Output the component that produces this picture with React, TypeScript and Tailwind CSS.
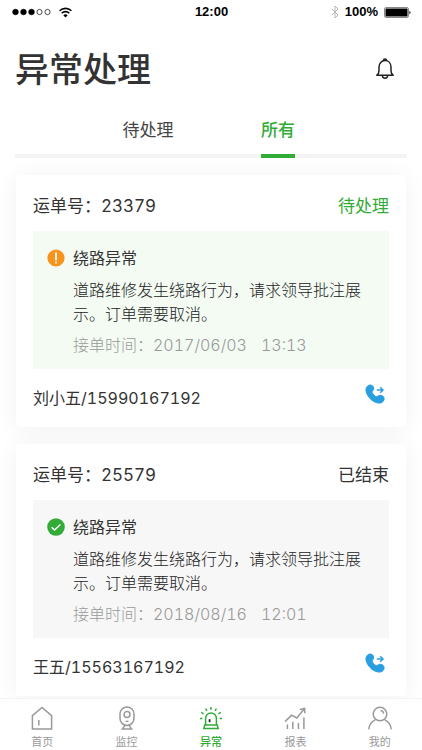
import { useState, type ReactNode } from 'react';
import clsx from 'clsx';

type Order = {
  id: string;
  status: string;
  pending: boolean;
  title: string;
  detail: string;
  date: string;
  time: string;
  driver: string;
  phone: string;
};

const orders: Order[] = [
  {
    id: '23379',
    status: '待处理',
    pending: true,
    title: '绕路异常',
    detail: '道路维修发生绕路行为，请求领导批注展示。订单需要取消。',
    date: '2017/06/03',
    time: '13:13',
    driver: '刘小五',
    phone: '15990167192',
  },
  {
    id: '25579',
    status: '已结束',
    pending: false,
    title: '绕路异常',
    detail: '道路维修发生绕路行为，请求领导批注展示。订单需要取消。',
    date: '2018/08/16',
    time: '12:01',
    driver: '王五',
    phone: '15563167192',
  },
];

const navItems: { label: string; active?: boolean; icon: ReactNode }[] = [
  {
    label: '首页',
    icon: (
      <>
        <path d="M2.4 23V9.6L12 1.4l9.6 8.2V23z" />
        <path d="M8.8 14v5.6" />
      </>
    ),
  },
  {
    label: '监控',
    icon: (
      <>
        <rect x="5" y="1" width="14" height="18.4" rx="7" />
        <circle cx="12" cy="8.6" r="3" />
        <path d="M10.600 15.400h2.8" />
        <path d="M10 19.400l-2.600 3.600h9.200L14 19.400" />
      </>
    ),
  },
  {
    label: '异常',
    active: true,
    icon: (
      <>
        <path d="M6.6 19v-6.6a5.4 5.4 0 0 1 10.8 0V19" />
        <path d="M4.8 22.6l.9-3.6h12.6l.9 3.6z" />
        <path d="M12 1v2.8M6.6 2.6l1.4 2.2M17.4 2.6L16 4.8M2.2 6.4l2.4 1.4M21.8 6.4l-2.4 1.4M1 12.6h2.4M20.6 12.6H23" />
        <path d="M10.6 13.2v3" stroke="#222" strokeWidth="1.8" />
      </>
    ),
  },
  {
    label: '报表',
    icon: (
      <>
        <path d="M2 15.6l6.6-6.4 5.2 2.8 7.4-9" />
        <path d="M16.8 3.4l4.8-.9.2 4.7" />
        <path d="M4.400 23v-4.600M9.800 23v-7.200M15.400 23v-6M20.900 23V11.400" />
      </>
    ),
  },
  {
    label: '我的',
    icon: (
      <>
        <circle cx="12" cy="8" r="6.8" />
        <path d="M12.6 4.4a3.6 3.6 0 0 1 3 3.2" />
        <path d="M.8 23.400c.2-4.400 2.800-7.800 6.600-9.800M23.200 23.400c-.2-4.400-2.800-7.800-6.600-9.800" />
      </>
    ),
  },
];

function StatusBar() {
  return (
    <div className="grid h-6 grid-cols-3 items-center pr-[11px] pl-3 font-['Liberation_Sans',sans-serif] text-[13px] font-bold text-black">
      <div className="flex items-center gap-2">
        <svg width="39" height="8" viewBox="0 0 39 8" stroke="#000" strokeWidth="0.7">
          <circle cx="3.5" cy="4" r="2.8" />
          <circle cx="11.5" cy="4" r="2.8" />
          <circle cx="19.5" cy="4" r="2.8" />
          <circle cx="27.5" cy="4" r="2.6" fill="none" />
          <circle cx="35.5" cy="4" r="2.6" fill="none" />
        </svg>
        <svg width="13" height="11" viewBox="0 0 13 11" fill="none" stroke="#000" strokeWidth="1.6">
          <path d="M.6 3.8a8.4 8.4 0 0 1 11.8 0" />
          <path d="M2.7 6.2a5.4 5.4 0 0 1 7.6 0" />
          <path d="M6.5 10.6L4.3 8.3a3.1 3.1 0 0 1 4.4 0z" fill="#000" stroke="none" />
        </svg>
      </div>
      <span className="text-center">12:00</span>
      <div className="flex items-center justify-end gap-1.5">
        <svg width="8" height="14" viewBox="0 0 8 14" fill="none" stroke="#b5b5b5" strokeWidth="1">
          <path d="M.8 3.8l6.2 6.2L4 13V1l3 3-6.2 6.2" />
        </svg>
        <span>100%</span>
        <svg width="27" height="11" viewBox="0 0 27 11">
          <rect x="0.5" y="0.5" width="24" height="10" rx="1.6" fill="#fff" stroke="#888" />
          <rect x="1.5" y="1.5" width="22" height="8" rx="0.6" fill="#000" />
          <path d="M25.4 3.8c1.6.4 1.6 3 0 3.4z" fill="#222" />
        </svg>
      </div>
    </div>
  );
}

function StateIcon({ pending }: { pending: boolean }) {
  return pending ? (
    <svg width="18" height="18" viewBox="0 0 18 18" className="shrink-0">
      <circle cx="9" cy="9" r="8.6" fill="#f7941f" />
      <path d="M9 3.4v8M9 12.800v1.800" stroke="#fff" strokeWidth="1.700" />
    </svg>
  ) : (
    <svg width="18" height="18" viewBox="0 0 18 18" className="shrink-0">
      <circle cx="9" cy="9" r="8.8" fill="#33ab37" />
      <path d="M4.6 9.2l3 2.9 5.8-5.6" fill="none" stroke="#fff" strokeWidth="1.4" />
    </svg>
  );
}

function CallIcon() {
  return (
    <svg width="20" height="20" viewBox="0 0 20 20" fill="#2a9fe0" stroke="#2a9fe0">
      <path
        d="M1 5.2C1.4 2.6 3.2 1 5.2 1c1.9 0 3.3 1.3 3.5 3.2.1 1.3-.6 2-1.2 2.8-.6.9-.3 1.9.6 3 .9 1.2 2.2 2.5 3.4 2.6 1 .1 1.7-.9 2.8-1.2 1.9-.5 4.5.6 4.8 2.8.3 2.4-1.6 4.8-4.4 4.9-3.4.1-7.4-1.8-10.2-5.2C2 10.900.6 7.900 1 5.200z"
        strokeWidth="1"
      />
      <path d="M11.8 6h6M15.200 3.200L18 6l-2.800 2.800" fill="none" strokeWidth="1.500" />
    </svg>
  );
}

function OrderCard({ order }: { order: Order }) {
  return (
    <article className="rounded bg-white px-[17px] shadow-[0_2px_24px_rgba(0,0,0,0.06)]">
      <header className="flex h-14 items-center justify-between pt-2 text-[17px] text-[#333]">
        <h2>运单号：{order.id}</h2>
        <span className={clsx(order.pending && 'text-[#33ab37]')}>{order.status}</span>
      </header>
      <div className={clsx('px-3.5 pt-[15px] pb-3', order.pending ? 'bg-[#f3fbf3]' : 'bg-[#f7f7f7]')}>
        <div className="flex items-center gap-2">
          <StateIcon pending={order.pending} />
          <h3 className="text-base/6 text-[#333]">{order.title}</h3>
        </div>
        <div className="pl-[26px]">
          <p className="mt-2 text-base/6 font-light text-[#222]">{order.detail}</p>
          <p className="mt-[7px] flex gap-3.5 text-base/6 font-light text-[#999]">
            <span>接单时间：{order.date}</span>
            <time>{order.time}</time>
          </p>
        </div>
      </div>
      <footer className="flex h-[58px] items-center justify-between text-base text-[#333]">
        <span>
          {order.driver}/{order.phone}
        </span>
        <a href={`tel:${order.phone}`} aria-label={`拨打${order.driver}`} className="mr-1 mb-2">
          <CallIcon />
        </a>
      </footer>
    </article>
  );
}

export default function App() {
  const [tab, setTab] = useState('所有');
  const visible = tab === '所有' ? orders : orders.filter((o) => o.pending);

  return (
    <div className="flex min-h-screen flex-col bg-white font-['Inter','Noto_Sans_CJK_SC',sans-serif] tabular-nums">
      <StatusBar />

      {/* Page title */}
      <header className="flex h-[90px] items-center justify-between px-[15px]">
        <h1 className="text-[34px] font-medium text-[#333]">异常处理</h1>
        <button aria-label="通知" className="mr-3">
          <svg width="20" height="22" viewBox="0 0 20 22" fill="none" stroke="#222" strokeWidth="1.5">
            <path d="M1.800 17.200c1.600-.9 2.200-2.400 2.200-4.400V9c0-3.700 2.500-6.400 6-6.400S16 5.300 16 9v3.800c0 2 .6 3.500 2.200 4.400z" strokeLinejoin="round" />
            <path d="M8.400 2.600a1.600 1.600 0 0 1 3.200 0" />
            <path d="M7.400 17.600a2.600 2.600 0 0 0 5.200 0" />
          </svg>
        </button>
      </header>

      {/* Tabs */}
      <div role="tablist" className="mx-[15px] grid h-11 grid-cols-2 justify-items-center border-b-4 border-[#f4f4f4] pr-16 pl-[68px]">
        {['待处理', '所有'].map((name) => (
          <button
            key={name}
            role="tab"
            aria-selected={tab === name}
            onClick={() => setTab(name)}
            className={clsx(
              '-mb-1 border-b-4 pb-1.5 text-[17px]',
              tab === name ? 'border-[#33ab37] font-medium text-[#33ab37]' : 'border-transparent text-[#444]'
            )}
          >
            {name}
          </button>
        ))}
      </div>

      {/* Order list */}
      <main className="flex grow flex-col gap-[17px] px-4 pt-[17px] pb-0.5">
        {visible.map((order) => (
          <OrderCard key={order.id} order={order} />
        ))}
      </main>

      {/* Bottom navigation */}
      <nav className="sticky bottom-0 grid h-[53px] grid-cols-5 border-t border-[#f2f2f2] bg-white">
        {navItems.map((item) => (
          <a
            key={item.label}
            href="#"
            className={clsx(
              'flex flex-col items-center gap-1 pt-[7px] text-[11px]/4',
              item.active ? 'font-medium text-[#33ab37]' : 'text-[#999]'
            )}
          >
            <svg width="24" height="24" viewBox="0 0 24 24" fill="none" stroke="currentColor" strokeWidth="1.5">
              {item.icon}
            </svg>
            {item.label}
          </a>
        ))}
      </nav>
    </div>
  );
}
